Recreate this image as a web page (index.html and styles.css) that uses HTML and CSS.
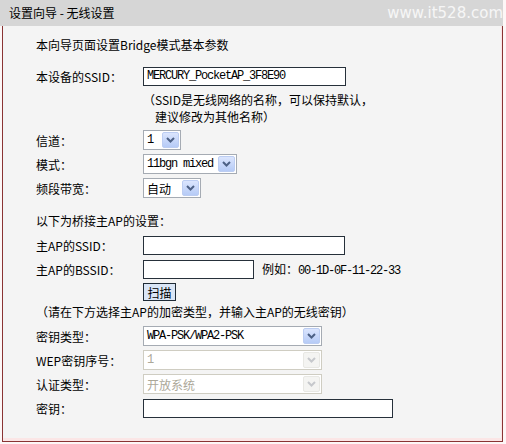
FILE: index.html
```html
<!DOCTYPE html>
<html lang="zh">
<head>
<meta charset="utf-8">
<title>设置向导 - 无线设置</title>
<link rel="stylesheet" href="styles.css">
</head>
<body>
<div class="page">
  <div class="hd"><span class="title">设置向导 - 无线设置</span><span class="wm">www.it528.com</span></div>
  <div class="panel">
    <div class="intro">本向导页面设置Bridge模式基本参数</div>

    <div class="row r-first"><span class="lbl">本设备的SSID：</span><span class="inp w203"><span class="mono">MERCURY_PocketAP_3F8E90</span></span></div>
    <div class="note"><div>（SSID是无线网络的名称，可以保持默认，</div><div class="indent">建议修改为其他名称）</div></div>

    <div class="row r-after-note"><span class="lbl">信道：</span>
      <span class="sel w38"><span class="v mono">1</span><span class="btn"><svg width="9" height="6" viewBox="0 0 9 6"><polyline points="1,1 4.5,4.5 8,1" fill="none" stroke="#4d6185" stroke-width="2"/></svg></span></span></div>
    <div class="row"><span class="lbl">模式：</span>
      <span class="sel w94"><span class="v mono">11bgn mixed</span><span class="btn"><svg width="9" height="6" viewBox="0 0 9 6"><polyline points="1,1 4.5,4.5 8,1" fill="none" stroke="#4d6185" stroke-width="2"/></svg></span></span></div>
    <div class="row"><span class="lbl">频段带宽：</span>
      <span class="sel w58"><span class="v">自动</span><span class="btn"><svg width="9" height="6" viewBox="0 0 9 6"><polyline points="1,1 4.5,4.5 8,1" fill="none" stroke="#4d6185" stroke-width="2"/></svg></span></span></div>

    <div class="section">以下为桥接主AP的设置：</div>
    <div class="row r-after-section"><span class="lbl">主AP的SSID：</span><span class="inp w202"></span></div>
    <div class="row"><span class="lbl">主AP的BSSID：</span><span class="inp w111"></span><span class="eg">例如：<span class="mono">00-1D-0F-11-22-33</span></span></div>
    <div class="row r-scan"><span class="lbl"></span><span class="scan">扫描</span></div>
    <div class="note2">（请在下方选择主AP的加密类型，并输入主AP的无线密钥）</div>

    <div class="row r-after-note2"><span class="lbl">密钥类型：</span>
      <span class="sel w179"><span class="v mono">WPA-PSK/WPA2-PSK</span><span class="btn"><svg width="9" height="6" viewBox="0 0 9 6"><polyline points="1,1 4.5,4.5 8,1" fill="none" stroke="#4d6185" stroke-width="2"/></svg></span></span></div>
    <div class="row"><span class="lbl">WEP密钥序号：</span>
      <span class="sel dis w179"><span class="v mono">1</span><span class="btn"><svg width="9" height="6" viewBox="0 0 9 6"><polyline points="1,1 4.5,4.5 8,1" fill="none" stroke="#c6c8cc" stroke-width="2"/></svg></span></span></div>
    <div class="row"><span class="lbl">认证类型：</span>
      <span class="sel dis w179"><span class="v">开放系统</span><span class="btn"><svg width="9" height="6" viewBox="0 0 9 6"><polyline points="1,1 4.5,4.5 8,1" fill="none" stroke="#c6c8cc" stroke-width="2"/></svg></span></span></div>
    <div class="row"><span class="lbl">密钥：</span><span class="inp w250"></span></div>
  </div>
</div>
</body>
</html>
```
FILE: styles.css
```css
html, body {
  margin: 0;
  padding: 0;
  background: #fdf7f7;
}
body {
  font-family: "Noto Sans CJK SC", "Noto Sans", sans-serif;
  font-size: 12px;
  color: #000;
}
.page {
  width: 506px;
  height: 444px;
}
.hd {
  width: 503px;
  height: 26px;
  background: #d6d6d6;
  box-sizing: border-box;
  padding-left: 9px;
  display: flex;
  align-items: center;
  justify-content: space-between;
}
.title {
  line-height: 26px;
}
.wm {
  font-family: "DejaVu Sans", sans-serif;
  font-size: 15px;
  color: #f6f6f6;
  line-height: 26px;
}
.panel {
  margin-left: 2px;
  width: 501px;
  height: 416px;
  box-sizing: border-box;
  border: 1px solid #8a3434;
  border-top: 0;
  background: #f4f4f4;
  box-shadow: inset -1px -3px 0 #fbe6e6;
  padding: 9px 0 0 33px;
}
.intro {
  line-height: 20px;
  height: 20px;
}
.row {
  display: flex;
  align-items: center;
  height: 24px;
}
.lbl {
  width: 107px;
  flex: none;
}
.r-first { margin-top: 9px; }
.note {
  margin-top: 3px;
  margin-left: 107px;
  line-height: 17px;
}
.note .indent { padding-left: 12px; }
.r-after-note { margin-top: 3px; }
.section {
  margin-top: 11px;
  line-height: 20px;
  height: 20px;
}
.r-after-section { margin-top: 2px; }
.r-scan { height: 22px; }
.note2 {
  height: 18px;
  line-height: 18px;
}
.r-after-note2 { margin-top: 3px; }

.mono {
  font-family: "Liberation Mono", monospace;
  font-size: 12px;
  letter-spacing: -1.2px;
}
.inp {
  box-sizing: border-box;
  height: 19px;
  border: 1px solid #26303a;
  background: #fff;
  padding-left: 3px;
  display: flex;
  align-items: center;
}
.w203 { width: 203px; }
.w202 { width: 202px; }
.w111 { width: 111px; }
.w250 { width: 250px; }
.w38 { width: 38px; }
.w94 { width: 94px; }
.w58 { width: 58px; }
.w179 { width: 179px; }

.sel {
  box-sizing: border-box;
  height: 20px;
  border: 1px solid #a5abb3;
  background: #fff;
  padding: 1px;
  display: flex;
  align-items: center;
}
.sel .v {
  flex: 1;
  padding-left: 2px;
  white-space: nowrap;
  overflow: hidden;
}
.sel .btn {
  flex: none;
  box-sizing: border-box;
  width: 17px;
  height: 16px;
  border: 1px solid #bccdf2;
  border-radius: 2px;
  background: linear-gradient(#dbe5fd, #b6cbf6);
  display: flex;
  align-items: center;
  justify-content: center;
}
.sel.dis {
  border-color: #cfcdc2;
  color: #aca899;
}
.sel.dis .btn {
  border-color: #e8e8e4;
  background: #f4f4f2;
}
.eg {
  margin-left: 8px;
}
.scan {
  box-sizing: border-box;
  width: 33px;
  height: 18px;
  border: 1px solid #1f2b36;
  background: #dae6f6;
  display: flex;
  align-items: center;
  justify-content: center;
  font-size: 12px;
}
```
